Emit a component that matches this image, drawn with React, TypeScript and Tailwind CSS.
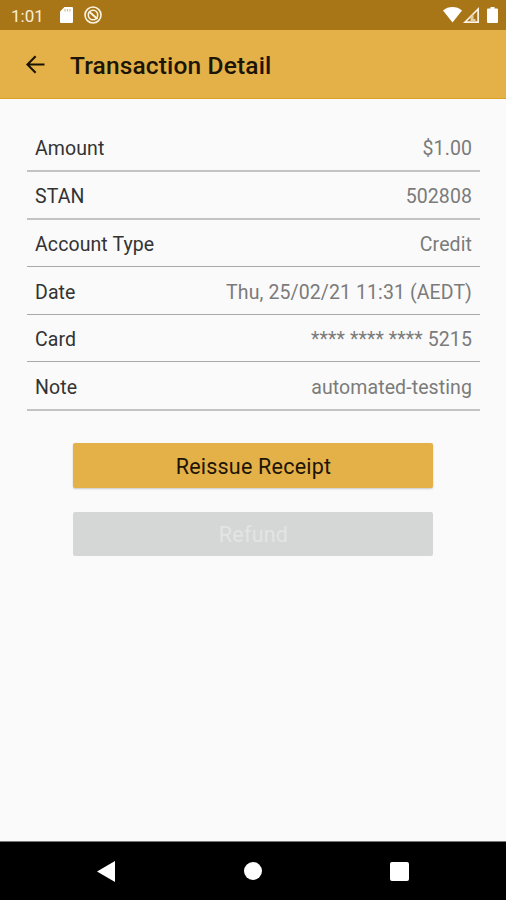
const details = [
  { label: "Amount", value: "$1.00", line: "h-12 border-b-2 border-[#c3c3c3]" },
  { label: "STAN", value: "502808", line: "h-12 border-b-2 border-[#c3c3c3]" },
  { label: "Account Type", value: "Credit", line: "h-[47px] border-b border-[#a8a8a8]" },
  { label: "Date", value: "Thu, 25/02/21 11:31 (AEDT)", line: "h-12 border-b border-[#a8a8a8]" },
  { label: "Card", value: "**** **** **** 5215", line: "h-[47px] border-b border-[#a8a8a8]" },
  { label: "Note", value: "automated-testing", line: "h-[49px] border-b-2 border-[#c3c3c3]" },
];

export default function App() {
  return (
    <div className="flex h-[900px] w-[506px] flex-col bg-[#fafafa] font-['Roboto',sans-serif]">
      <StatusBar />
      <header className="flex h-[69px] items-center border-b border-[#dba125] bg-[#e4b048] pl-[26px]">
        <svg className="h-[19px] w-[19px]" viewBox="0 0 19 19" fill="none" stroke="#1a1303" strokeWidth="2.1">
          <path d="M18.5 9.5H1.6M9.6 1.2L1.4 9.5l8.2 8.3" />
        </svg>
        <h1 className="ml-[25px] pt-[5px] text-[24.5px] leading-none font-medium tracking-[0.15px] text-[#1c1505]">
          Transaction Detail
        </h1>
      </header>

      <main className="flex flex-1 flex-col pt-[25px]">
        <div className="mr-[26px] ml-[27px]">
          {details.map((item) => (
            <DetailRow key={item.label} {...item} />
          ))}
        </div>
        <div className="mx-auto mt-8 flex w-[360px] flex-col gap-6">
          <button className="h-[45px] rounded-[2px] bg-[#e4b048] pt-[3px] pl-px text-[21.5px] tracking-[0.22px] text-[#1c1505] shadow-[0_1px_2px_rgba(0,0,0,0.2)]">
            Reissue Receipt
          </button>
          <button
            disabled
            className="h-11 rounded-[2px] bg-[#d5d7d6] pt-[3px] pl-px text-[21.5px] tracking-[0.22px] text-[#e3e4e4]"
          >
            Refund
          </button>
        </div>
      </main>

      <NavigationBar />
    </div>
  );
}

function DetailRow({ label, value, line }: { label: string; value: string; line: string }) {
  return (
    <div className={`flex items-center justify-between px-2 pt-1 text-[19.5px] leading-none tracking-[0.1px] ${line}`}>
      <span className="text-[#333]">{label}</span>
      <span className="text-[#7b7b7b]">{value}</span>
    </div>
  );
}

function StatusBar() {
  return (
    <div className="flex h-[30px] items-center justify-between bg-[#a87616] pr-2 pl-[11px] text-white">
      <div className="flex items-center">
        <span className="w-[49px] pt-[2px] text-[17px] leading-none text-[#f8eedb]">1:01</span>
        <svg className="h-4 w-[13px]" viewBox="0 0 13 16">
          <path fill="#fff" d="M4.5 0H12a1 1 0 0 1 1 1v14a1 1 0 0 1-1 1H1a1 1 0 0 1-1-1V4.500z" />
          <path stroke="#d9bd8a" strokeWidth="1.2" d="M5 2v2.500M7.500 2v2.500M10 2v2.500" />
        </svg>
        <svg className="ml-[11px] h-[18px] w-[18px]" viewBox="0 0 18 18" fill="none" stroke="#fbf3e3" strokeWidth="1.6">
          <circle cx="9" cy="9" r="8" />
          <circle cx="9" cy="9" r="4.700" />
          <path strokeWidth="1.9" d="M5 5.500l8.500 7.500" />
        </svg>
      </div>
      <div className="flex items-center">
        <svg className="h-4 w-[19px]" viewBox="0 0 19 16" fill="#fff">
          <path d="M0 3.500C5.300-1.100 13.700-1.100 19 3.500L9.500 15.500z" />
        </svg>
        <svg className="ml-[1px] h-4 w-4" viewBox="0 0 16 16">
          <path fill="#fbf3e3" fillRule="evenodd" d="M16 0v16H0zM14.300 4L4 14.300H14.300z" />
          <path fill="#e3cda4" d="M7.500 9.500L10.500 6.500V12H12.500V14.500H7.500z" />
        </svg>
        <svg className="ml-2 h-4 w-[11px]" viewBox="0 0 11 16" fill="#fff">
          <path d="M3.500 0h4v1.500H10a1 1 0 0 1 1 1V15a1 1 0 0 1-1 1H1a1 1 0 0 1-1-1V2.500a1 1 0 0 1 1-1h2.500z" />
        </svg>
      </div>
    </div>
  );
}

function NavigationBar() {
  return (
    <nav className="flex h-[59px] items-center justify-between border-t border-[#777] bg-black px-[97px]">
      <svg className="h-[21px] w-[18px]" viewBox="0 0 18 21" fill="#fff">
        <path d="M18 0v21L0 10.500z" />
      </svg>
      <span className="h-[18px] w-[18px] rounded-full bg-white" />
      <span className="h-[19px] w-[19px] rounded-[2px] bg-white" />
    </nav>
  );
}
